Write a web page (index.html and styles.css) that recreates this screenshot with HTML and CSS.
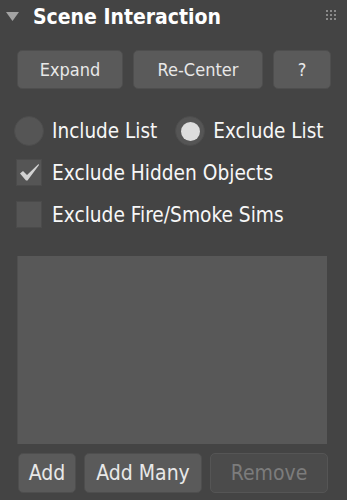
FILE: index.html
```html
<!DOCTYPE html>
<html lang="en">
<head>
    <meta charset="UTF-8">
    <meta name="viewport" content="width=device-width, initial-scale=1.0">
    <title>Scene Interaction</title>
    <link rel="stylesheet" href="styles.css">
</head>
<body>
<div class="rollout">
    <div class="rollout-header">
        <svg class="arrow" width="13" height="9" viewBox="0 0 13 9"><path d="M0 0 H13 L6.5 9 Z" fill="#a3a3a3"/></svg>
        <span class="rollout-title">Scene Interaction</span>
        <svg class="grip" width="10" height="10" viewBox="0 0 10 10">
            <rect x="0" y="0" width="2" height="2"/><rect x="4" y="0" width="2" height="2"/><rect x="8" y="0" width="2" height="2"/>
            <rect x="0" y="4" width="2" height="2"/><rect x="4" y="4" width="2" height="2"/><rect x="8" y="4" width="2" height="2"/>
            <rect x="0" y="8" width="2" height="2"/><rect x="4" y="8" width="2" height="2"/><rect x="8" y="8" width="2" height="2"/>
        </svg>
    </div>

    <!-- Top buttons -->
    <div class="btn-row top-row">
        <button class="btn btn-expand">Expand</button>
        <button class="btn btn-recenter">Re-Center</button>
        <button class="btn btn-help">?</button>
    </div>

    <!-- List mode -->
    <div class="radio-row">
        <label class="radio"><span class="radio-dot"></span>Include List</label>
        <label class="radio checked"><span class="radio-dot"></span>Exclude List</label>
    </div>

    <label class="check checked">
        <span class="check-box">
            <svg width="20" height="17" viewBox="0 0 20 17"><path d="M0 9.5 L3 7 L7 11 L18.5 0 L19 1 L7.5 16.5 L6 16.5 Z" fill="#d2d2d2"/></svg>
        </span>
        Exclude Hidden Objects
    </label>
    <label class="check">
        <span class="check-box"></span>
        Exclude Fire/Smoke Sims
    </label>

    <div class="object-list"></div>

    <!-- Bottom buttons -->
    <div class="btn-row bottom-row">
        <button class="btn btn-add">Add</button>
        <button class="btn btn-addmany">Add Many</button>
        <button class="btn btn-remove" disabled>Remove</button>
    </div>
</div>
</body>
</html>
```

FILE: styles.css
```css
* {
    margin: 0;
    padding: 0;
    box-sizing: border-box;
}

body {
    background: #444444;
    font-family: 'DejaVu Sans Condensed', 'DejaVu Sans', sans-serif;
    color: #f7f7f7;
    width: 347px;
    height: 500px;
    overflow: hidden;
}

.rollout-header {
    display: flex;
    align-items: center;
    height: 34px;
    padding-left: 6px;
    padding-right: 11px;
}

.arrow {
    margin-right: 14px;
    margin-top: -2px;
}

.rollout-title {
    font-size: 21px;
    font-weight: bold;
    color: #ffffff;
    margin-top: -1px;
}

.grip {
    margin-left: auto;
    fill: #8a8a8a;
    margin-top: -4px;
}

.btn-row {
    display: flex;
}

.btn {
    font-family: inherit;
    font-size: 18px;
    color: #e8e8e8;
    background: #5a5a5a;
    border: 1px solid #4e4e4e;
    border-radius: 5px;
    cursor: pointer;
}

.btn:disabled {
    background: #4b4b4b;
    border-color: #555555;
    color: #7c7c7c;
    cursor: default;
}

.top-row {
    margin-top: 16px;
    padding-left: 17px;
    gap: 10px;
}

.top-row .btn {
    height: 39px;
}

.btn-expand { width: 106px; }
.btn-recenter { width: 130px; }
.btn-help { width: 58px; }

.radio-row {
    display: flex;
    margin-top: 27px;
    padding-left: 14px;
    height: 30px;
}

.radio {
    display: flex;
    align-items: center;
    font-size: 20.5px;
}

.radio-dot {
    width: 30px;
    height: 30px;
    border-radius: 50%;
    background: #555555;
    border: 1px solid #4d4d4d;
    margin-right: 8px;
    display: flex;
    align-items: center;
    justify-content: center;
}

.radio.checked {
    margin-left: 18px;
}

.radio.checked .radio-dot::after {
    content: '';
    width: 19px;
    height: 19px;
    border-radius: 50%;
    background: #dddddd;
}

.check {
    display: flex;
    align-items: center;
    font-size: 20.7px;
    padding-left: 16px;
    height: 27px;
    margin-top: 13px;
}

.check + .check {
    margin-top: 15px;
}

.check-box {
    width: 26px;
    height: 27px;
    background: #555555;
    border: 1px solid #4b4b4b;
    margin-right: 10px;
    display: flex;
    align-items: center;
    justify-content: center;
}

.check-box svg {
    margin-left: 2px;
}

.object-list {
    margin: 28px 0 0 17px;
    width: 310px;
    height: 188px;
    background: #585858;
    border-left: 1px solid #4f4f4f;
}

.bottom-row {
    margin-top: 9px;
    padding-left: 18px;
    gap: 8px;
}

.bottom-row .btn {
    height: 40px;
    font-size: 21px;
}

.btn-add { width: 58px; }
.btn-addmany { width: 118px; }
.btn-remove { width: 118px; }
```
